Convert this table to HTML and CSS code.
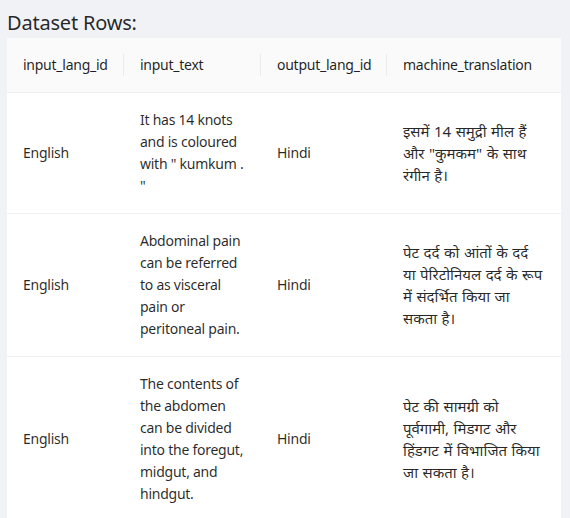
FILE: index.html
```html
<!DOCTYPE html>
<html lang="en">
<head>
<meta charset="utf-8">
<title>Dataset Rows</title>
<link rel="stylesheet" href="styles.css">
</head>
<body>
<div class="page">
  <h2 class="title">Dataset Rows:</h2>
  <table class="rows">
    <colgroup>
      <col class="c1"><col class="c2"><col class="c3"><col class="c4">
    </colgroup>
    <thead>
      <tr>
        <th class="sep">input_lang_id</th>
        <th class="sep">input_text</th>
        <th class="sep">output_lang_id</th>
        <th>machine_translation</th>
      </tr>
    </thead>
    <tbody>
      <tr>
        <td>English</td>
        <td>It has 14 knots and is coloured with " kumkum . "</td>
        <td>Hindi</td>
        <td class="hi" lang="hi">इसमें 14 समुद्री मील हैं और "कुमकम" के साथ रंगीन है।</td>
      </tr>
      <tr>
        <td>English</td>
        <td>Abdominal pain can be referred to as visceral pain or peritoneal pain.</td>
        <td>Hindi</td>
        <td class="hi" lang="hi">पेट दर्द को आंतों के दर्द या पेरिटोनियल दर्द के रूप में संदर्भित किया जा सकता है।</td>
      </tr>
      <tr>
        <td>English</td>
        <td>The contents of the abdomen can be divided into the foregut, midgut, and hindgut.</td>
        <td>Hindi</td>
        <td class="hi" lang="hi">पेट की सामग्री को पूर्वगामी, मिडगट और हिंडगट में विभाजित किया जा सकता है।</td>
      </tr>
    </tbody>
  </table>
</div>
</body>
</html>
```
FILE: styles.css
```css
html, body {
  margin: 0;
  padding: 0;
  background: #f0f2f5;
}
body {
  font-family: "Noto Sans", "Open Sans", sans-serif;
  color: rgba(0, 0, 0, 0.85);
}
.page {
  padding: 8px 9px 0 7px;
}
.title {
  margin: 0;
  font-size: 20px;
  font-weight: 400;
  line-height: 30px;
  letter-spacing: -0.2px;
  color: rgba(0, 0, 0, 0.85);
}
.rows {
  width: 554px;
  table-layout: fixed;
  border-collapse: collapse;
  background: #fff;
  font-size: 14px;
  line-height: 22px;
  letter-spacing: -0.25px;
}
.c1 { width: 117px; }
.c2 { width: 137px; }
.c3 { width: 126px; }
.c4 { width: 174px; }
.rows th {
  position: relative;
  background: #fafafa;
  font-weight: 400;
  text-align: left;
  padding: 16px;
  border-bottom: 1px solid #f0f0f0;
  color: rgba(0, 0, 0, 0.88);
}
.rows th.sep::after {
  content: "";
  position: absolute;
  right: 0;
  top: 50%;
  width: 1px;
  height: 22px;
  transform: translateY(-50%);
  background: rgba(0, 0, 0, 0.06);
}
.rows td {
  padding: 16px;
  vertical-align: middle;
  border-bottom: 1px solid #f0f0f0;
  overflow-wrap: break-word;
}
.rows td.hi {
  font-size: 15px;
  letter-spacing: 0;
  word-spacing: 0.6px;
}
```
